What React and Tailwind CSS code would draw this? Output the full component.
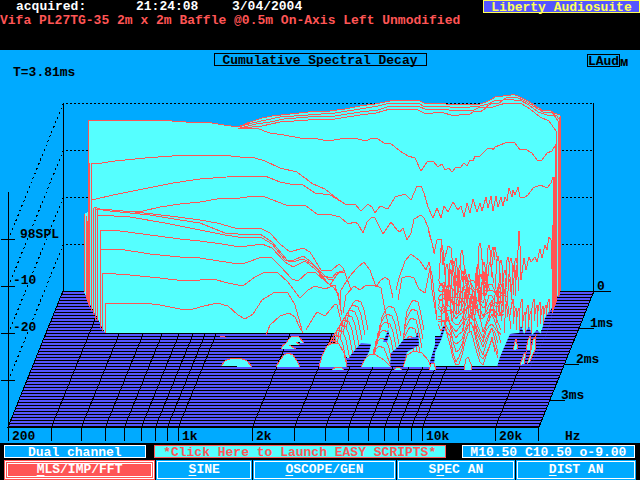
import clsx from "clsx";

const RED = "#ff5555";
const CYAN = "#55ffff";
const INDIGO = "#5555ff";

const FREQ_TICKS = [51, 81, 105, 124, 141, 155, 167, 178, 252, 294, 325, 348, 368, 384, 398, 411, 422, 495];

const AXIS_LABELS = [
  { x: 12, y: 440, text: "200" },
  { x: 182, y: 440, text: "1k" },
  { x: 256, y: 440, text: "2k" },
  { x: 426, y: 440, text: "10k" },
  { x: 499, y: 440, text: "20k" },
  { x: 565, y: 440, text: "Hz" },
  { x: 13, y: 76, text: "T=3.81ms" },
  { x: 20, y: 238, text: "98SPL" },
  { x: 13, y: 284, text: "-10" },
  { x: 13, y: 331, text: "-20" },
  { x: 597, y: 290, text: "0" },
  { x: 590, y: 327, text: "1ms" },
  { x: 576, y: 363, text: "2ms" },
  { x: 561, y: 399, text: "3ms" },
];

const TOP_EDGE =
  "88,120 158,120 186,122 200,122 212,123 224,125 238,127 250,122 262,118 272,116 290,114 308,112 330,111 345,109 360,106 375,104 390,101 400,100 418,100 424,103 430,104 440,103 446,104 460,105 470,104 480,104 486,102 492,99 497,96 500,97 506,95 509,96 513,94 520,97 528,101 534,105 542,110 550,110 554,113 560,115";

// slices that stay above the noise, back to front
const CURVES = [
  "238,127 252,123 266,120 280,117 308,115 335,113 360,109 378,106 390,103 418,103 425,107 440,106 460,108 480,106 488,104 496,100 501,101 508,97 516,97 525,101 535,107 543,112 550,112 557,116 560,121",
  "240,128 256,124 270,122 284,119 308,117 335,116 360,112 378,110 390,106 418,106 427,110 440,109 458,111 466,110 472,111 478,108 486,107 492,103 498,104 504,99 514,100 520,100 529,105 538,112 547,115 554,115 558,121",
  "243,128 262,126 280,122 308,120 335,119 360,115 376,113 390,109 418,110 426,114 440,112 455,116 463,114 469,115 474,111 480,112 486,108 493,107 499,105 506,103 514,103 522,104 530,109 540,117 549,121 556,131",
  "238,128 256,128 270,133 284,135 300,138 318,139 328,141 340,139 350,138 358,139 366,141 372,138 378,139 384,143 390,143 400,151 408,156 415,158 421,171 427,162 433,161 438,167 442,164 445,170 449,168 452,172 456,167 461,167 464,163 467,166 470,160 473,161 475,156 480,156 487,149 492,148 493,150 495,147 500,145 505,143 510,142 515,143 520,150 525,149 532,153 537,160 542,160 547,153 552,151 556,144",
  "91,163 102,163 115,161 145,158 172,156 200,155 222,155 240,157 255,158 265,161 280,168 297,172 305,178 313,184 325,189 335,197 345,204 355,204 361,211 368,204 372,207 375,213 380,206 388,209 395,197 405,194 411,200 417,186 421,186 424,193 428,207 433,218 437,208 441,218 444,206 448,212 453,202 458,210 461,206 464,217 467,203 470,213 473,199 477,212 480,203 482,211 486,197 488,208 491,196 493,211 496,196 498,207 501,197 503,206 505,197 507,201 509,188 512,197 513,190 515,195 518,187 520,197 524,198 528,195 533,188 540,185 545,187 548,187 551,183 553,177",
  "92,200 113,195 133,191 153,187 173,183 200,179 240,176 265,176 280,182 290,184 303,185 315,193 330,195 337,199 345,204",
  "135,212 143,211 160,207 180,204 200,202 217,199 240,198 255,196 265,197 286,205 305,205 317,214 332,215 340,217 348,224 355,222 358,224 363,233 367,222 372,217 375,218 383,234 391,222 397,230 400,232 403,228 407,240 411,233 414,219 421,215 424,218 428,227 432,243 435,254",
  "94,207 100,209 135,212 170,216 200,220 217,223 235,228 262,229 270,233 280,244 290,252 303,248 310,252 321,270 332,270 339,264 343,268 345,273",
  "95,209 110,211 150,215 180,220 200,223 225,233 238,234 260,234 272,242 287,260 292,261 303,256 310,261 323,276 332,278 337,272 345,273 351,290",
  "97,215 130,217 165,223 200,230 225,235 238,237 262,238 272,244 285,260 292,262 303,259 314,265 328,279 333,280 340,271 345,273",
  "100,230 120,231 150,235 180,239 200,241 222,244 240,247 262,244 272,248 285,262 293,267 305,261 315,269 330,285 338,273",
  "100,249 125,250 150,254 180,257 200,258 232,263 245,263 262,257 272,258 280,266 292,279 298,281 308,272 316,273 325,281 333,287 338,293 341,310",
  "102,273 130,275 160,278 185,281 200,280 213,279 228,283 243,286 255,277 265,272 278,273 288,282 300,298 308,290 315,286 325,289 335,285 339,300 342,315",
  "105,303 143,303 160,305 180,309 190,310 200,307 217,303 228,306 238,315 245,319 253,314 262,300 275,292 288,293 295,305 302,330",
  "266,335 270,325 280,316 289,313 295,317 300,328 303,333",
  "306,330 313,318 317,312 325,316 335,304 337,305 342,325",
  "340,312 341,290 346,282 350,276 357,268 364,262 370,270 376,287 380,281 385,277 389,280 393,298",
  "343,313 346,295 354,286 360,290 366,285 374,285 381,288 384,305 389,328",
  "396,290 399,278 405,261 411,254 420,261 426,270 429,262 432,275 435,300 437,320",
  "398,300 402,278 408,276 414,278 419,289 425,293 430,268 432,290 436,314",
  "428,230 432,243 434,253 437,240 441,239 443,265 448,246 451,248 453,268 456,258 459,285",
];

const LEFT_STRIPS = [84, 86, 87, 88, 89, 91, 93, 95, 97, 100, 102, 105];
const STRIP_TOPS = [214, 216, 221, 120, 163, 163, 208, 208, 209, 230, 273, 303];
const STRIP_ENDS = [292, 299, 302, 305, 307, 311, 315, 320, 321, 328, 331, 333];

const RIGHT_STRIPS = [
  [552, 225, 313],
  [553, 177, 310],
  [554, 177, 307],
  [555, 144, 305],
  [556, 131, 302],
  [558, 121, 297],
  [559, 117, 295],
  [560, 116, 291],
];

// places where the floor shows between the ridges
const GAPS = [
  "347,367 350,356 361,343 371,344 369,352 361,367",
  "383,342 387,333 388,330 389,334 387,342",
  "390,367 391,353 397,348 404,339 416,337 418,332 419,345 407,352 403,367",
  "429,365 435,345 435,336 440,336 444,325 445,328 441,340 435,352 434,365",
  "497,367 500,357 510,334 519,333 521,326 524,334 529,327 532,335 537,330 541,334 545,318 549,312 552,316 546,335 530,367",
];

// rows of humps marching down and left as time advances
const RIDGES = [
  { cx: 357, w: 11, top: 300, dx: -3, dy: 5, n: 9 },
  { cx: 390, w: 11, top: 306, dx: -2, dy: 8, n: 6 },
  { cx: 414, w: 10, top: 300, dx: -1, dy: 9, n: 6 },
];

const FRONT_ARCS = [
  "221,366 225,361 232,358 240,358 247,361 252,367",
  "276,367 280,360 284,355 288,353 293,355 297,361 300,367",
  "319,367 322,356 327,346 333,343 339,344 344,353 347,367",
  "332,370 336,367 341,367 344,370",
  "361,367 365,359 370,354 376,355 384,360 391,367",
  "394,370 397,367 400,368 402,370",
  "403,367 407,355 414,351 422,353 428,360 431,367",
  "429,370 431,364 434,363 436,370",
  "464,370 466,359 468,357 471,364 471,370",
  "220,336 224,336 226,338",
  "281,349 284,344 289,345 296,349",
  "284,345 289,340 295,341 300,345",
  "287,341 292,336 299,337 304,343",
  "513,350 515,342 516,339 518,349",
  "526,350 528,340 530,336 531,350",
  "520,365 524,354 526,352 524,364",
  "527,364 530,355 533,340 536,336 535,350 530,361",
];

const EDGE_SLICE =
  "512,285 513,268 516,280 518,250 519,231 520,246 521,280 524,258 526,270 529,257 531,262 535,257 537,262 540,249 542,258 545,245 547,250 549,237 552,241 551,270";

function makeRandom(seed) {
  let s = seed;
  return () => {
    s = (s * 16807) % 2147483647;
    return s / 2147483647;
  };
}

function ridgePoints({ cx, w, top, dx, dy }, i) {
  const x = cx + dx * i;
  const y = top + dy * i;
  const base = Math.min(366, y + 30);
  return `${x - w},${base} ${x - w + 3},${y + 11} ${x - w + 7},${y + 3} ${x - 1},${y} ${x + 4},${y + 2} ${x + w - 4},${y + 10} ${x + w},${base}`;
}

// narrow resonance spikes of the treble region
function spikePaths() {
  const rand = makeRandom(4711);
  const paths = [];
  for (let x = 441; x < 515; x += 1.5) {
    const left = Math.round(x);
    const y = 243 + Math.round(rand() * 62);
    const height = 14 + Math.round(rand() * 30);
    const lean = Math.round(rand() * 2);
    paths.push(`${left - 2},${y + height} ${left},${y + 3} ${left + 1},${y} ${left + 2},${y + 5} ${left + 3 + lean},${y + height - 4}`);
  }
  for (let x = 512; x < 551; x += 3) {
    const y = 298 + Math.round(rand() * 14);
    paths.push(`${x - 2},${y + 16} ${x},${y + 3} ${x + 1},${y} ${x + 2},${y + 22}`);
  }
  return paths;
}

// late slices dip together at the same few frequencies
function dipPaths() {
  const rand = makeRandom(911);
  const paths = [];
  for (let k = 0; k < 12; k++) {
    const points = [];
    for (let x = 438; x < 509 - k; x += 3) {
      const distance = Math.min(Math.abs(x - 457), Math.abs(x - 483), Math.abs(x - 500));
      const dip = Math.max(0, 1 - distance / 12);
      const y = 283 + k * 4 + dip * (10 + k * 3) + (rand() - 0.5) * 9;
      points.push(`${x},${Math.round(Math.min(y, 365))}`);
    }
    paths.push(points.join(" "));
  }
  return paths;
}

const NOISE = [...spikePaths(), ...dipPaths()];

const MENU = [
  { before: "", key: "M", after: "LS/IMP/FFT", grow: "grow-[152]", active: true },
  { before: "", key: "S", after: "INE", grow: "grow-[96]" },
  { before: "", key: "O", after: "SCOPE/GEN", grow: "grow-[143]" },
  { before: "S", key: "P", after: "EC AN", grow: "grow-[119]" },
  { before: "", key: "D", after: "IST AN", grow: "grow-[120]" },
];

const BOX = "flex h-[13px] items-start justify-center border leading-[13px]";

function Floor() {
  const rows = [];
  for (let y = 291; y < 426; y += 3) {
    const shift = Math.round(((y - 291) * 55) / 136);
    rows.push(<path key={y} d={`M${63 - shift} ${y}.5H${594 - shift}`} />);
  }
  return (
    <g stroke="#000">
      <path d="M63 291H594L539 427H8Z" fill={INDIGO} />
      {rows}
      {FREQ_TICKS.map((x) => (
        <path key={x} d={`M${x + 0.5} 427l55 -136`} />
      ))}
      <path d="M8 427H539" strokeWidth="2" />
    </g>
  );
}

function Axes() {
  return (
    <g stroke="#000" fill="none">
      <path d="M8.5 192V441M63.5 103V292M593.5 103V291M593 291.5H611M579 328.5H594M564 364.5H579M550 400.5H565" />
      <path d="M1 239.5H15M1 286.5H15M1 333.5H15M1 380.5H15" />
      {[103, 150, 197, 244].map((y) => (
        <g key={y}>
          <path d={`M66 ${y}.5H594`} strokeDasharray="2 2" />
          <path d={`M63.5 ${y}L8.5 ${y + 136}`} strokeDasharray="2 3" />
        </g>
      ))}
      {[...FREQ_TICKS, 538].map((x) => (
        <path key={x} d={`M${x + 0.5} 427V441`} />
      ))}
    </g>
  );
}

function Waterfall() {
  return (
    <g fill="none" stroke={RED}>
      <polygon
        points={`84,292 84,214 88,212 ${TOP_EDGE} 560,291 549,313 540,334 510,366 361,366 335,350 335,333 105,333`}
        fill={CYAN}
        stroke="none"
      />
      <polyline points={TOP_EDGE} />
      {CURVES.map((points) => (
        <polyline key={points} points={points} />
      ))}
      {RIDGES.map((ridge) =>
        Array.from({ length: ridge.n }, (_, i) => (
          <polyline key={`${ridge.cx}-${i}`} points={ridgePoints(ridge, i)} />
        ))
      )}
      {NOISE.map((points) => (
        <polyline key={points} points={points} />
      ))}
      <polyline points={EDGE_SLICE} />
      {LEFT_STRIPS.map((x, i) => (
        <path key={x} d={`M${x}.5 ${STRIP_TOPS[i]}V${STRIP_ENDS[i]}`} />
      ))}
      {RIGHT_STRIPS.map(([x, y1, y2]) => (
        <path key={x} d={`M${x}.5 ${y1}V${y2}`} />
      ))}
    </g>
  );
}

function Gaps() {
  const rows = [];
  for (let y = 291; y < 370; y += 3) rows.push(`M330 ${y}.5H560`);
  return (
    <g>
      <clipPath id="gaps">
        {GAPS.map((points) => (
          <polygon key={points} points={points} />
        ))}
      </clipPath>
      <g clipPath="url(#gaps)">
        <path d="M330 291H560V370H330Z" fill={INDIGO} />
        <path d={rows.join("")} stroke="#000" />
      </g>
      {FRONT_ARCS.map((points) => (
        <polyline key={points} points={points} fill={CYAN} stroke={RED} />
      ))}
    </g>
  );
}

function DecayChart() {
  return (
    <svg
      viewBox="0 67 640 376"
      className="block w-full"
      shapeRendering="crispEdges"
      role="img"
      aria-label="Cumulative spectral decay"
    >
      <Floor />
      <Axes />
      <Waterfall />
      <Gaps />
      <g fontSize="13" fontWeight="700">
        {AXIS_LABELS.map((label) => (
          <text key={label.text} x={label.x} y={label.y}>
            {label.text}
          </text>
        ))}
      </g>
    </svg>
  );
}

function App() {
  return (
    <div className="bg-black font-['Liberation_Mono',monospace] text-[13px] leading-[12px] font-bold whitespace-pre">
      <header className="h-[50px]">
        <div className="flex h-[13px] items-start leading-[13px] text-white">
          <span className="w-[136px] pl-4">acquired:</span>
          <span className="w-24">21:24:08</span>
          <span className="grow">3/04/2004</span>
          <span className={clsx(BOX, "w-[157px] border-[#ffff55] bg-[#5555ff] text-[#ffff55]")}>
            Liberty Audiosuite
          </span>
        </div>
        <p className="pt-[2px] text-[#ff5555]">Vifa PL27TG-35 2m x 2m Baffle @0.5m On-Axis Left Unmodified</p>
      </header>

      <main className="bg-[#00aaff]">
        <div className="grid h-[17px] grid-cols-[1fr_213px_1fr] items-start pt-[3px] text-black">
          <h1 className={clsx(BOX, "col-start-2 border-black")}>Cumulative Spectral Decay</h1>
          <div className="flex items-start justify-end pr-3">
            <span className={clsx(BOX, "mt-px border-black")}>LAud</span>
            <span className="pt-1">ᴍ</span>
          </div>
        </div>
        <DecayChart />
      </main>

      <footer className="px-1 pt-[2px]">
        <div className="flex h-[15px] gap-2 pr-px text-white">
          <div className={clsx(BOX, "grow-[141] basis-0 border-white bg-[#00aaff]")}>Dual channel</div>
          <button className={clsx(BOX, "grow-[293] basis-0 border-[#ff5555] bg-[#55ffff] text-[#ff5555]")}>
            *Click Here to Launch EASY SCRIPTS*
          </button>
          <div className={clsx(BOX, "ml-2 grow-[173] basis-0 border-white bg-[#00aaff]")}>M10.50 C10.50 o-9.00</div>
        </div>
        <nav className="flex h-5 gap-px">
          {MENU.map((item) => (
            <button
              key={item.key}
              className={clsx("flex basis-0 p-px text-white", item.grow, item.active ? "bg-[#ff5555]" : "bg-[#00aaff]")}
            >
              <span
                className={clsx(
                  "flex h-full grow items-center justify-center border-white",
                  item.active ? "border-3 border-double" : "border"
                )}
              >
                <span>
                  {item.before}
                  <u className="underline-offset-2">{item.key}</u>
                  {item.after}
                </span>
              </span>
            </button>
          ))}
        </nav>
      </footer>
    </div>
  );
}

export default App;
